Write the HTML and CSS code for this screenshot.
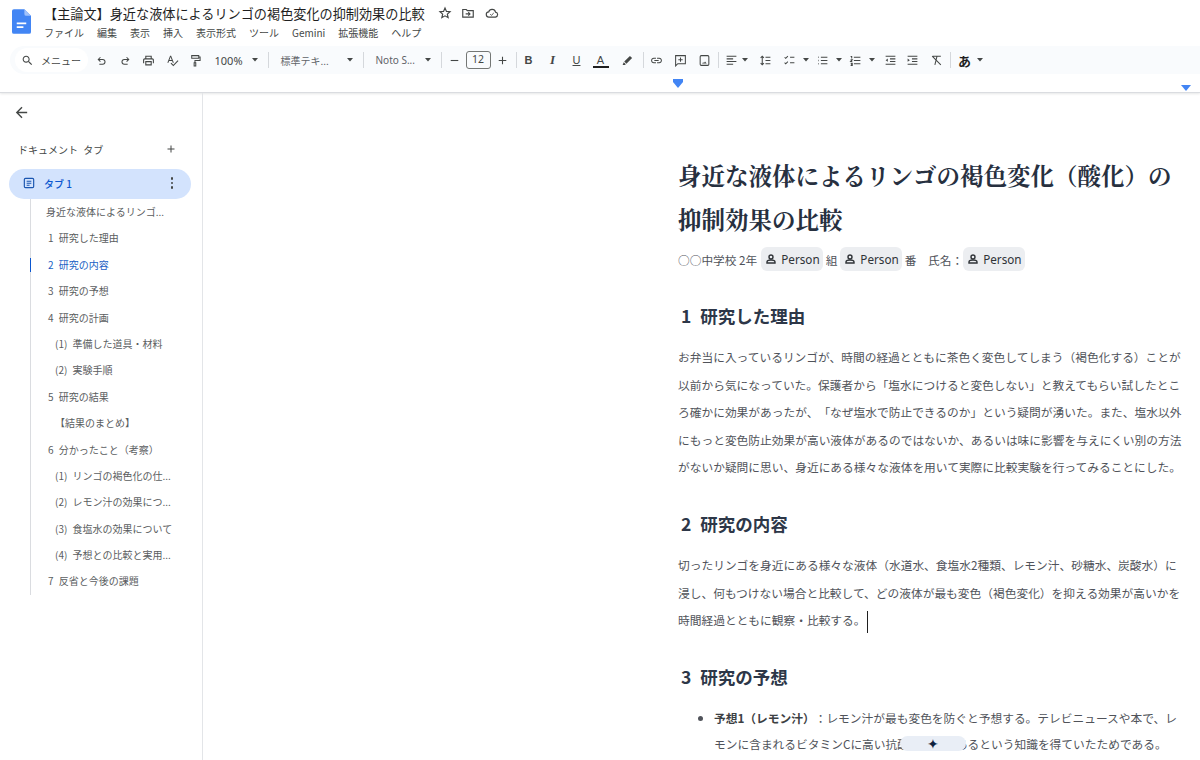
FILE: index.html
```html
<!DOCTYPE html>
<html lang="ja">
<head>
    <meta charset="UTF-8">
    <title>【主論文】身近な液体によるリンゴの褐色変化の抑制効果の比較</title>
    <link rel="stylesheet" href="styles.css">
</head>
<body>

    <!-- shared icons -->
    <svg class="defs" aria-hidden="true">
        <symbol id="i-person" viewBox="0 0 24 24"><circle cx="12" cy="8" r="4" fill="none" stroke="currentColor" stroke-width="2.8"/><path d="M4 20v-2c0-2.5 4-4 8-4s8 1.500 8 4v2z" fill="none" stroke="currentColor" stroke-width="2.8"/></symbol>
        <symbol id="i-caret" viewBox="0 0 10 10"><path d="M2 3h6L5 6.500z" fill="currentColor"/></symbol>
    </svg>

    <header class="topbar">
        <div class="title-area">
            <svg class="docs-logo" viewBox="0 0 20 26">
                <path d="M2 0h11l7 7v17a2 2 0 0 1-2 2H2a2 2 0 0 1-2-2V2a2 2 0 0 1 2-2z" fill="#4285f4"/>
                <path d="M13 0l7 7h-5a2 2 0 0 1-2-2z" fill="#a1c2fa"/>
                <path d="M5 14h10v1.800H5zM5 18h7v1.800H5z" fill="#fff"/>
            </svg>
            <div class="title-text">
                <div class="title-row">
                    <span class="doc-name">【主論文】身近な液体によるリンゴの褐色変化の抑制効果の比較</span>
                    <svg class="title-icon" viewBox="0 0 24 24"><path d="M12 3.500l2.500 5.700 6.200.6-4.700 4.100 1.400 6.100L12 16.900l-5.400 3.100L8 13.900 3.300 9.800l6.200-.6z" fill="none" stroke="currentColor" stroke-width="2"/></svg>
                    <svg class="title-icon" viewBox="0 0 24 24"><path d="M3 6h6l2 2h10v11H3z" fill="none" stroke="currentColor" stroke-width="2"/><path d="M8 13.500h7M12.500 10.500l3 3-3 3" fill="none" stroke="currentColor" stroke-width="1.800"/></svg>
                    <svg class="title-icon" viewBox="0 0 24 24"><path d="M7 19a4.500 4.500 0 0 1-.6-9A6 6 0 0 1 18 10.500 4.300 4.300 0 0 1 18 19z" fill="none" stroke="currentColor" stroke-width="2"/><path d="M9 14l2 2 4-4" fill="none" stroke="currentColor" stroke-width="1.600"/></svg>
                </div>
                <nav class="menu-row">
                    <span>ファイル</span><span>編集</span><span>表示</span><span>挿入</span><span>表示形式</span><span>ツール</span><span>Gemini</span><span>拡張機能</span><span>ヘルプ</span>
                </nav>
            </div>
        </div>

        <div class="toolbar">
            <div class="menu-search">
                <svg class="icon" viewBox="0 0 24 24"><path d="M15.500 14h-.79l-.28-.27C15.410 12.590 16 11.110 16 9.500 16 5.910 13.090 3 9.500 3S3 5.910 3 9.500 5.910 16 9.500 16c1.610 0 3.090-.59 4.230-1.570l.27.28v.79l5 4.990L20.490 19l-4.990-5zm-6 0C7.010 14 5 11.990 5 9.500S7.010 5 9.500 5 14 7.010 14 9.500 11.990 14 9.500 14z"/></svg>
                <span>メニュー</span>
            </div>
            <span class="tool pitch first"><svg class="icon line" viewBox="0 0 24 24"><path d="M10 6L6 10l4 4M6 10h8a4.500 4.500 0 0 1 0 9H8"/></svg></span>
            <span class="tool pitch"><svg class="icon line" viewBox="0 0 24 24"><path d="M14 6l4 4-4 4M18 10h-8a4.500 4.500 0 0 0 0 9h6"/></svg></span>
            <span class="tool pitch"><svg class="icon" viewBox="0 0 24 24"><path d="M19 8h-1V3H6v5H5c-1.660 0-3 1.340-3 3v6h4v4h12v-4h4v-6c0-1.660-1.340-3-3-3zM8 5h8v3H8V5zm8 14H8v-4h8v4zm2-2v-4H6v4H4v-6c0-.55.45-1 1-1h14c.55 0 1 .45 1 1v6h-2z"/></svg></span>
            <span class="tool pitch"><svg class="icon" viewBox="0 0 24 24"><path d="M12.450 16h2.090L9.430 3H7.570L2.460 16h2.090l1.120-3h5.640l1.140 3zm-6.020-5L8.500 5.480 10.570 11H6.430zm15.160.59l-8.090 8.090L9.830 16l-1.410 1.410 5.090 5.090L23 13l-1.410-1.410z"/></svg></span>
            <span class="tool pitch"><svg class="icon line" viewBox="0 0 24 24"><path d="M5 3h13v5H5zM18 5.500h2.500V12H11v4M9.500 16h3v6h-3z"/></svg></span>
            <span class="zoom-val">100%</span>
            <svg class="caret zoom-caret"><use href="#i-caret"/></svg>
            <i class="sep"></i>
            <span class="select style-select">標準テキ...</span>
            <svg class="caret"><use href="#i-caret"/></svg>
            <i class="sep"></i>
            <span class="select font-select">Noto S...</span>
            <svg class="caret"><use href="#i-caret"/></svg>
            <i class="sep"></i>
            <span class="tool small"><svg class="icon" viewBox="0 0 24 24"><path d="M5 11h14v2H5z"/></svg></span>
            <span class="size-box">12</span>
            <span class="tool small"><svg class="icon" viewBox="0 0 24 24"><path d="M19 13h-6v6h-2v-6H5v-2h6V5h2v6h6z"/></svg></span>
            <i class="sep snug"></i>
            <span class="tool fmt bold">B</span>
            <span class="tool fmt italic">I</span>
            <span class="tool fmt under">U</span>
            <span class="tool fmt color">A</span>
            <span class="tool marker"><svg class="icon" viewBox="0 0 24 24"><path d="M16.500 3.500l4 4L10 18l-4-4zM5 15l4 4-2 1.500H3z"/></svg></span>
            <i class="sep snug near"></i>
            <span class="tool after-sep"><svg class="icon" viewBox="0 0 24 24"><path d="M3.900 12c0-1.710 1.390-3.100 3.100-3.100h4V7H7c-2.760 0-5 2.240-5 5s2.240 5 5 5h4v-1.900H7c-1.710 0-3.100-1.390-3.100-3.100zM8 13h8v-2H8v2zm9-6h-4v1.900h4c1.710 0 3.100 1.390 3.100 3.100s-1.390 3.100-3.100 3.100h-4V17h4c2.760 0 5-2.240 5-5s-2.240-5-5-5z"/></svg></span>
            <span class="tool"><svg class="icon line" viewBox="0 0 24 24"><path d="M3 3h18v15H7l-4 4zM12 6.500v8M8 10.500h8"/></svg></span>
            <span class="tool"><svg class="icon line" viewBox="0 0 24 24"><rect x="4" y="3" width="16" height="18" rx="2"/><path d="M7.500 17.500l2-2.500 1.500 1.500 2-2.500 3 3.500z" fill="#444746" stroke="none"/></svg></span>
            <i class="sep snug touch"></i>
            <span class="tool tight"><svg class="icon line" viewBox="0 0 24 24"><path d="M3 4h18M3 9h12M3 14h18M3 19h12"/></svg></span>
            <svg class="caret close"><use href="#i-caret"/></svg>
            <span class="tool line-sp"><svg class="icon line" viewBox="0 0 24 24"><path d="M6 4v16M3 7l3-3 3 3M3 17l3 3 3-3M12 6h9M12 12h9M12 18h9"/></svg></span>
            <span class="tool tight"><svg class="icon line" viewBox="0 0 24 24"><path d="M3 6l2 2 4-4M3 16l2 2 4-4M13 6h8M13 16h8"/></svg></span>
            <svg class="caret"><use href="#i-caret"/></svg>
            <span class="tool tight"><svg class="icon line" viewBox="0 0 24 24"><path d="M9 6h12M9 12h12M9 18h12"/><path d="M4 6h1M4 12h1M4 18h1" stroke-width="3"/></svg></span>
            <svg class="caret"><use href="#i-caret"/></svg>
            <span class="tool tight"><svg class="icon line" viewBox="0 0 24 24"><path d="M9 6h12M9 12h12M9 18h12M3 4.500h2v4M3 10.500h3l-3 3.500h3M3 17h3v4H3M4 19h2"/></svg></span>
            <svg class="caret"><use href="#i-caret"/></svg>
            <span class="tool indent"><svg class="icon line" viewBox="0 0 24 24"><path d="M3 4h18M11 9h10M11 14h10M3 19h18"/><path d="M7 8.500l-4 3 4 3z" fill="#444746" stroke="none"/></svg></span>
            <span class="tool pull"><svg class="icon line" viewBox="0 0 24 24"><path d="M3 4h18M11 9h10M11 14h10M3 19h18"/><path d="M3 8.500l4 3-4 3z" fill="#444746" stroke="none"/></svg></span>
            <span class="tool"><svg class="icon line" viewBox="0 0 24 24"><path d="M5 4h15M13 4L9 20M4 4l16 16"/></svg></span>
            <i class="sep snug close-sep"></i>
            <span class="tool lang">あ</span>
            <svg class="caret lang-caret"><use href="#i-caret"/></svg>
        </div>

        <div class="ruler">
            <i class="tab-stop left"></i>
            <i class="tab-stop right"></i>
        </div>
    </header>

    <div class="workspace">
        <aside class="sidebar">
            <svg class="back" viewBox="0 0 24 24"><path d="M20 11H7.830l5.590-5.590L12 4l-8 8 8 8 1.410-1.410L7.830 13H20z"/></svg>
            <div class="tabs-head">
                <span>ドキュメント タブ</span>
                <svg class="icon" viewBox="0 0 24 24"><path d="M19 13h-6v6h-2v-6H5v-2h6V5h2v6h6z"/></svg>
            </div>
            <div class="tab-pill">
                <svg class="tab-doc" viewBox="0 0 24 24"><rect x="4" y="4" width="16" height="16" rx="2" fill="none" stroke="currentColor" stroke-width="2"/><path d="M8 9h8M8 12.500h8M8 16h5" stroke="currentColor" stroke-width="1.800"/></svg>
                <span class="tab-name">タブ 1</span>
                <span class="tab-more"><i></i><i></i><i></i></span>
            </div>
            <ul class="outline">
                <li class="l0">身近な液体によるリンゴ...</li>
                <li>1 研究した理由</li>
                <li class="active">2 研究の内容</li>
                <li>3 研究の予想</li>
                <li>4 研究の計画</li>
                <li class="l2">(1) 準備した道具・材料</li>
                <li class="l2">(2) 実験手順</li>
                <li>5 研究の結果</li>
                <li class="l2">【結果のまとめ】</li>
                <li>6 分かったこと（考察）</li>
                <li class="l2">(1) リンゴの褐色化の仕...</li>
                <li class="l2">(2) レモン汁の効果につ...</li>
                <li class="l2">(3) 食塩水の効果について</li>
                <li class="l2">(4) 予想との比較と実用...</li>
                <li>7 反省と今後の課題</li>
            </ul>
        </aside>

        <main class="doc">
            <h1>身近な液体によるリンゴの褐色変化（酸化）の<br>抑制効果の比較</h1>
            <div class="meta">
                <span class="school">○○中学校 2年</span>
                <span class="chip"><svg><use href="#i-person"/></svg>Person</span>
                <span>組</span>
                <span class="chip"><svg><use href="#i-person"/></svg>Person</span>
                <span class="name-label">番　氏名：</span>
                <span class="chip"><svg><use href="#i-person"/></svg>Person</span>
            </div>

            <h2>1 研究した理由</h2>
            <p>お弁当に入っているリンゴが、時間の経過とともに茶色く変色してしまう（褐色化する）ことが<br>以前から気になっていた。保護者から「塩水につけると変色しない」と教えてもらい試したとこ<br>ろ確かに効果があったが、「なぜ塩水で防止できるのか」という疑問が湧いた。また、塩水以外<br>にもっと変色防止効果が高い液体があるのではないか、あるいは味に影響を与えにくい別の方法<br>がないか疑問に思い、身近にある様々な液体を用いて実際に比較実験を行ってみることにした。</p>

            <h2>2 研究の内容</h2>
            <p>切ったリンゴを身近にある様々な液体（水道水、食塩水2種類、レモン汁、砂糖水、炭酸水）に<br>浸し、何もつけない場合と比較して、どの液体が最も変色（褐色変化）を抑える効果が高いかを<br>時間経過とともに観察・比較する。<i class="cursor"></i></p>

            <h2>3 研究の予想</h2>
            <ul class="bullets">
                <li><b>予想1（レモン汁）</b>：レモン汁が最も変色を防ぐと予想する。テレビニュースや本で、レ<br>モンに含まれるビタミンCに高い抗酸化作用があるという知識を得ていたためである。</li>
            </ul>
            <div class="gemini">✦</div>
        </main>
    </div>

</body>
</html>
```

FILE: styles.css
```css
* {
    box-sizing: border-box;
}

html, body {
    margin: 0;
    height: 760px;
    overflow: hidden;
}

body {
    font-family: "Noto Sans CJK JP", "Noto Sans", sans-serif;
    background-color: #fff;
    color: #444746;
    text-spacing-trim: space-all;
}

.defs {
    display: none;
}

.topbar {
    height: 93px;
    border-bottom: 1px solid #dadce0;
    box-shadow: 0 1px 2px rgba(60, 64, 67, 0.12);
}

.title-area {
    display: flex;
    height: 46px;
    padding-left: 12px;
}

.docs-logo {
    width: 19px;
    height: 25px;
    margin-top: 9px;
}

.title-text {
    margin-left: 13px;
}

.title-row {
    display: flex;
    align-items: center;
    height: 26px;
}

.doc-name {
    font-size: 13.150px;
    color: #1f1f1f;
    white-space: nowrap;
}

.title-icon {
    width: 14px;
    height: 14px;
    margin-left: 9.500px;
    color: #444746;
}

.doc-name + .title-icon {
    margin-left: 13px;
}

.menu-row {
    display: flex;
    gap: 13px;
    font-size: 10px;
    line-height: 14px;
    color: #444746;
}

.toolbar {
    display: flex;
    align-items: center;
    height: 28px;
    margin-left: 10px;
    padding-left: 5px;
    background-color: #f9fbfd;
    border-radius: 14px 0 0 14px;
}

.icon {
    width: 13px;
    height: 13px;
    fill: #444746;
    flex: none;
}

.icon.line {
    fill: none;
    stroke: #444746;
    stroke-width: 1.900;
}

.menu-search {
    display: flex;
    align-items: center;
    gap: 7px;
    width: 73px;
    height: 24px;
    padding-left: 6px;
    background-color: #fff;
    border-radius: 12px;
    font-size: 10px;
    white-space: nowrap;
}

.tool {
    display: flex;
    align-items: center;
    justify-content: center;
    width: 24px;
    height: 24px;
    flex: none;
}

.tool.pitch {
    width: 23.500px;
}

.tool.first {
    margin-left: 2px;
}

.tool.small {
    width: 12px;
}

.tool.tight {
    width: 18px;
    margin-left: 3px;
}

.sep + .tool.tight {
    margin-left: 4px;
}

.tool.marker {
    margin-left: 3px;
}

.tool.after-sep {
    margin-left: 1px;
}

.tool.line-sp {
    margin-left: 4px;
}

.tool.indent {
    margin-left: 2px;
}

.tool.pull {
    margin-left: -2px;
}

.caret {
    width: 10px;
    height: 10px;
    margin-left: 2px;
    flex: none;
    color: #444746;
}

.caret.close {
    margin-left: -1px;
}

.lang-caret {
    margin-left: -2px;
}

.zoom-val {
    width: 40px;
    padding-left: 7px;
    font-family: "Noto Sans", sans-serif;
    font-size: 11px;
}

.select + .caret {
    margin-left: 0;
}

.sep {
    width: 1px;
    height: 16px;
    margin: 0 7px 0 8px;
    flex: none;
    background-color: #d5d8dc;
}

.sep.snug {
    margin-right: 0;
    margin-left: 7px;
}

.sep.near {
    margin-left: 3px;
}

.sep.touch {
    margin-left: 1px;
}

.sep.close-sep {
    margin-left: 1px;
}

.sep.close-sep + .lang {
    margin-left: 2px;
}

.select {
    font-size: 10px;
    white-space: nowrap;
    color: #5f6368;
}

.style-select {
    width: 69px;
    padding-left: 5px;
}

.font-select {
    width: 52px;
    padding-left: 5px;
    font-family: "Noto Sans", sans-serif;
}

.size-box {
    width: 25px;
    height: 18px;
    line-height: 15px;
    margin: 0 6px 0 5px;
    text-align: center;
    font-family: "Noto Sans", sans-serif;
    font-size: 10.500px;
    border: 1px solid #747775;
    border-radius: 3px;
}

.fmt {
    font-family: "Liberation Sans", sans-serif;
    font-size: 11px;
}

.bold {
    font-weight: bold;
}

.italic {
    font-family: "Liberation Serif", serif;
    font-style: italic;
    font-weight: bold;
    font-size: 13px;
}

.under {
    text-decoration: underline;
}

.color {
    position: relative;
    line-height: 1;
}

.color::after {
    content: "";
    position: absolute;
    left: 4px;
    right: 4px;
    bottom: 4px;
    height: 2px;
    background-color: #1f1f1f;
}

.lang {
    font-size: 13px;
    font-weight: bold;
    color: #1f1f1f;
}

.ruler {
    position: relative;
    height: 18px;
}

.tab-stop {
    position: absolute;
    top: 8px;
    width: 0;
    height: 0;
    border-left: 5px solid transparent;
    border-right: 5px solid transparent;
    border-top: 6px solid #4285f4;
}

.tab-stop.left {
    left: 673px;
}

.tab-stop.left::before {
    content: "";
    position: absolute;
    left: -5px;
    top: -9px;
    width: 10px;
    height: 3px;
    background-color: #4285f4;
}

.tab-stop.right {
    left: 1181px;
    top: 11px;
}

.workspace {
    display: flex;
    height: 667px;
}

.sidebar {
    width: 203px;
    flex: none;
    border-right: 1px solid #e3e5e8;
    padding-left: 9px;
}

.back {
    display: block;
    width: 17px;
    height: 17px;
    margin: 11px 0 0 4px;
    fill: #444746;
}

.tabs-head {
    display: flex;
    justify-content: space-between;
    align-items: center;
    margin-top: 20px;
    padding: 0 25px 0 9px;
    font-size: 10px;
    word-spacing: 3px;
    color: #444746;
    height: 16px;
}

.tabs-head .icon {
    width: 12px;
    height: 12px;
}

.tab-pill {
    display: flex;
    align-items: center;
    width: 182px;
    height: 30px;
    margin-top: 12px;
    padding: 0 18px 2px 13px;
    background-color: #d3e3fd;
    border-radius: 15px;
    color: #0b57d0;
}

.tab-doc {
    width: 14px;
    height: 14px;
    color: #1a56b0;
}

.tab-name {
    flex: 1;
    margin-left: 8px;
    font-size: 10px;
    font-weight: 500;
}

.tab-more {
    display: flex;
    flex-direction: column;
    gap: 2px;
}

.tab-more i {
    width: 2.500px;
    height: 2.500px;
    border-radius: 50%;
    background-color: #444746;
}

.outline {
    list-style: none;
    margin: 0 0 0 21px;
    padding: 0;
    border-left: 1px solid #dadce0;
    width: 160px;
}

.outline li {
    position: relative;
    height: 26.400px;
    line-height: 26.400px;
    padding-left: 17px;
    font-size: 10px;
    word-spacing: 3px;
    color: #5a5d60;
    white-space: nowrap;
}

.outline .l0 {
    padding-left: 15px;
}

.outline .l2 {
    padding-left: 24px;
}

.outline .active {
    color: #1a5fc4;
}

.outline .active::before {
    content: "";
    position: absolute;
    left: -1px;
    top: 6px;
    width: 1px;
    height: 14px;
    background-color: #0b57d0;
}

.doc {
    position: relative;
    flex: 1;
    padding: 60px 0 0 475px;
    overflow: hidden;
    color: #50535a;
}

h1 {
    margin: 0;
    font-family: "Noto Serif CJK JP", "Noto Sans CJK JP", serif;
    font-size: 23.500px;
    font-weight: bold;
    line-height: 44px;
    color: #27303f;
    white-space: nowrap;
}

.meta {
    display: flex;
    align-items: center;
    gap: 3px;
    height: 24px;
    margin: 6px 0 33px;
    font-size: 11.700px;
    white-space: nowrap;
}

.school {
    margin-right: 1px;
}

.name-label {
    margin-right: -3px;
}

.chip {
    display: inline-flex;
    align-items: center;
    gap: 4px;
    height: 24px;
    padding: 0 3px 0 4px;
    background-color: #eceef1;
    border-radius: 6px;
    font-family: "Noto Sans", sans-serif;
    font-size: 11.700px;
    color: #2f3337;
}

.chip svg {
    width: 12px;
    height: 12px;
}

h2 {
    margin: 31px 0 0 3px;
    font-size: 17.500px;
    font-weight: bold;
    line-height: 24px;
    word-spacing: 5px;
    color: #2d3748;
}

p {
    margin: 15px 0 0;
    font-size: 11.720px;
    line-height: 27.600px;
    white-space: nowrap;
}

.cursor {
    display: inline-block;
    width: 1px;
    height: 22px;
    margin-left: 1px;
    vertical-align: middle;
    background-color: #1f1f1f;
}

.bullets {
    margin: 16px 0 0;
    padding-left: 36px;
    font-size: 11.720px;
    line-height: 26.400px;
    white-space: nowrap;
}

.bullets b {
    color: #3c4043;
}

.gemini {
    position: absolute;
    left: 697px;
    top: 643px;
    width: 66px;
    height: 15px;
    line-height: 15px;
    text-align: center;
    font-size: 14px;
    color: #0f2240;
    background-color: #e9eef6;
    border-radius: 8px;
}
```
